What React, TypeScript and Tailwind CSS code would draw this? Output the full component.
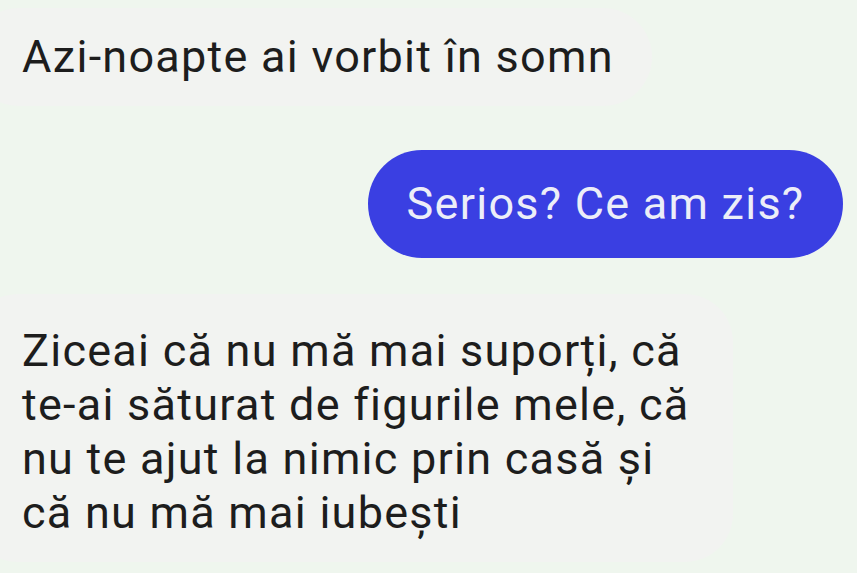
const font = { fontFamily: 'Roboto, "Liberation Sans", sans-serif' }

export default function App() {
  return (
    <div className="h-[573px] w-[857px] overflow-hidden bg-[#eff6ee]" style={font}>
      <div className="flex flex-col pt-2">
        <div className="ml-[-30px] flex h-[98px] w-[682px] items-center rounded-[49px] bg-[#f2f3f1] pl-[52px] text-[45px] tracking-[1.25px] text-[#1d1d1d]">
          Azi-noapte ai vorbit în somn
        </div>
        <div className="ml-[368px] mt-[44px] flex h-[108px] w-[475px] items-center justify-center rounded-[54px] bg-[#3a3fe2] text-[45px] tracking-[1.25px] text-[#eceef8]">
          Serios? Ce am zis?
        </div>
        <div className="ml-[-30px] mt-[36px] h-[268px] w-[763px] rounded-[48px] bg-[#f2f3f1] pl-[52px] pt-[30px] text-[45px] leading-[54px] tracking-[1.25px] text-[#1d1d1d]">
          Ziceai că nu mă mai suporți, că
          <br />
          te-ai săturat de figurile mele, că
          <br />
          nu te ajut la nimic prin casă și
          <br />
          că nu mă mai iubești
        </div>
      </div>
    </div>
  )
}
